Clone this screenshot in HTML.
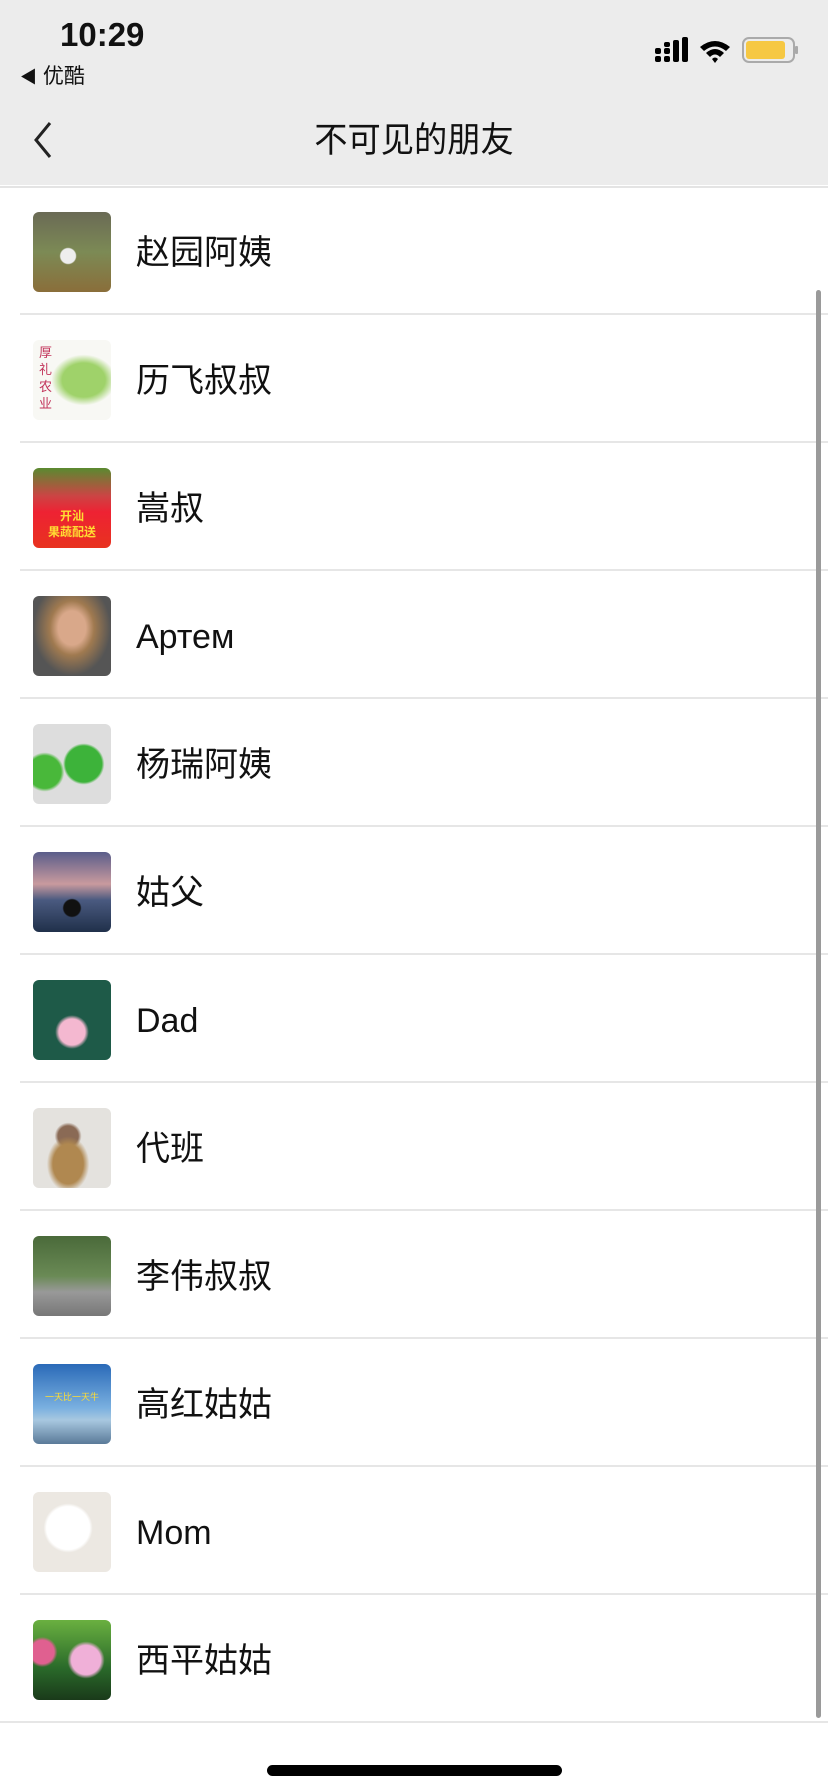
<!DOCTYPE html>
<html><head><meta charset="utf-8"><style>
*{margin:0;padding:0;box-sizing:border-box}
body{width:828px;height:1792px;background:#fff;position:relative;overflow:hidden;font-family:"Liberation Sans","Noto Sans CJK SC",sans-serif;color:#111}
.hdr{position:absolute;left:0;top:0;width:828px;height:185px;background:#ececec}
.hl{position:absolute;left:0;top:186px;width:828px;height:2px;background:#e4e4e4}
.time{position:absolute;left:60px;top:16px;font-size:33px;font-weight:bold}
.yk{position:absolute;left:20px;top:60px;font-size:21px}
.title{position:absolute;left:0;width:828px;top:112px;text-align:center;font-size:35px;transform:scaleX(0.95)}
.row{position:absolute;left:0;width:828px;height:128px}
.row .av{position:absolute;left:33px;top:25px;width:78px;height:80px;border-radius:6px;overflow:hidden}
.row .nm{position:absolute;left:136px;top:2px;line-height:128px;font-size:34px;color:#111}
.row .sep{position:absolute;left:20px;right:0;bottom:0;height:2px;background:#e6e6e6}
.sb{position:absolute;left:816px;top:290px;width:5px;height:1428px;border-radius:3px;background:#9a9a9a}
.home{position:absolute;left:267px;top:1765px;width:295px;height:11px;border-radius:6px;background:#000}
</style></head><body>
<div class="hdr"></div><div class="hl"></div>
<div class="time">10:29</div>
<div class="yk"><span style="font-size:17px">◀</span> 优酷</div>
<svg style="position:absolute;left:653px;top:36px" width="145" height="28" viewBox="0 0 145 28">
<g fill="#000"><rect x="2" y="12" width="6" height="6" rx="2"/><rect x="2" y="20" width="6" height="6" rx="2"/><rect x="11" y="12" width="6" height="6" rx="2"/><rect x="11" y="20" width="6" height="6" rx="2"/><rect x="11" y="6" width="6" height="5" rx="2"/><rect x="20" y="4" width="6" height="22" rx="2"/><rect x="29" y="1" width="6" height="25" rx="2" fill="#000"/></g>
<path d="M47 11 Q62 -1 77 11 L73 15 Q62 6 51 15Z" fill="#000"/><path d="M53 17 Q62 9 71 17 L67 21 Q62 16 57 21Z" fill="#000"/><path d="M59 23 L62 27 L65 23 Q62 20 59 23Z" fill="#000"/>
<rect x="90" y="2" width="51" height="24" rx="6" fill="none" stroke="#aaa" stroke-width="2"/><rect x="93" y="5" width="39" height="18" rx="3" fill="#f6c843"/><rect x="142" y="10" width="3" height="8" rx="1" fill="#aaa"/>
</svg>
<svg style="position:absolute;left:30px;top:120px" width="28" height="40" viewBox="0 0 28 40"><path d="M20 3 L6 20 L20 37" fill="none" stroke="#222" stroke-width="3"/></svg>
<div class="title">不可见的朋友</div>

<div class="row" style="top:187px"><div class="av" style="background:radial-gradient(circle at 45% 55%,#eee 0 12%,transparent 14%),linear-gradient(#6a6a55,#7c8a55 50%,#8a6e3a)"></div><div class="nm">赵园阿姨</div><div class="sep"></div></div>
<div class="row" style="top:315px"><div class="av" style="background:radial-gradient(ellipse at 65% 50%,#9fd26a 0 30%,transparent 45%),#f8f8f4"><span style="position:absolute;left:6px;top:4px;font-size:13px;line-height:17px;color:#c2345a;width:14px">厚礼农业</span></div><div class="nm">历飞叔叔</div><div class="sep"></div></div>
<div class="row" style="top:443px"><div class="av" style="background:linear-gradient(#5a8a30,#c44 35%,#e23 55%,#e8321f)"><span style="position:absolute;left:0;top:40px;width:78px;text-align:center;font-size:12px;line-height:16px;color:#fd3;font-weight:bold">开汕<br>果蔬配送</span></div><div class="nm">嵩叔</div><div class="sep"></div></div>
<div class="row" style="top:571px"><div class="av" style="background:radial-gradient(ellipse at 50% 40%,#d9a88a 0 25%,#a07a50 40%,#555 70%)"></div><div class="nm">Артем</div><div class="sep"></div></div>
<div class="row" style="top:699px"><div class="av" style="background:radial-gradient(circle at 65% 50%,#3db33a 0 28%,transparent 32%),radial-gradient(circle at 15% 60%,#49b83a 0 20%,transparent 24%),#ddd"></div><div class="nm">杨瑞阿姨</div><div class="sep"></div></div>
<div class="row" style="top:827px"><div class="av" style="background:radial-gradient(circle at 50% 70%,#111 0 12%,transparent 14%),linear-gradient(#5a5d8a,#c99a9e 40%,#4a5a80 60%,#20304a)"></div><div class="nm">姑父</div><div class="sep"></div></div>
<div class="row" style="top:955px"><div class="av" style="background:radial-gradient(circle at 50% 65%,#f4b8d0 0 20%,transparent 26%),#1e5a48"></div><div class="nm">Dad</div><div class="sep"></div></div>
<div class="row" style="top:1083px"><div class="av" style="background:radial-gradient(ellipse at 45% 70%,#b08850 0 25%,transparent 35%),radial-gradient(circle at 45% 35%,#8a6a55 0 15%,transparent 20%),#e4e2de"></div><div class="nm">代班</div><div class="sep"></div></div>
<div class="row" style="top:1211px"><div class="av" style="background:linear-gradient(#4a6a3a,#6a8a55 50%,#999 70%,#777)"></div><div class="nm">李伟叔叔</div><div class="sep"></div></div>
<div class="row" style="top:1339px"><div class="av" style="background:linear-gradient(#2a6ab8,#7ab0e0 55%,#a8c8e0 70%,#5a7a98)"><span style="position:absolute;left:0;top:26px;width:78px;text-align:center;font-size:9px;color:#fd3">一天比一天牛</span></div><div class="nm">高红姑姑</div><div class="sep"></div></div>
<div class="row" style="top:1467px"><div class="av" style="background:radial-gradient(circle at 45% 45%,#fff 0 35%,transparent 40%),#ece8e2"></div><div class="nm">Mom</div><div class="sep"></div></div>
<div class="row" style="top:1595px"><div class="av" style="background:radial-gradient(circle at 68% 50%,#f0b0d8 0 22%,transparent 28%),radial-gradient(circle at 12% 40%,#e06090 0 14%,transparent 18%),linear-gradient(#6ab040,#2a6a2a 60%,#1a3a1a)"></div><div class="nm">西平姑姑</div><div class="sep" style="left:0"></div></div>

<div class="sb"></div>
<div class="home"></div>
</body></html>
